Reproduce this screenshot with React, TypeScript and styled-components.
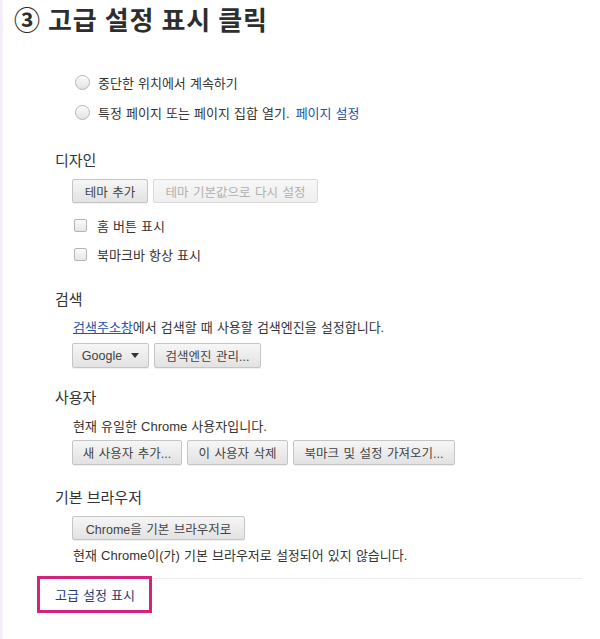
import React from "react";
import styled, { createGlobalStyle } from "styled-components";

const GlobalStyle = createGlobalStyle`
	html, body {
		margin: 0;
		padding: 0;
		background: #ffffff;
	}
	body {
		font-family: "Liberation Sans", "Noto Sans CJK KR", sans-serif;
		color: #333333;
	}
`;

const Page = styled.div`
	width: 600px;
	height: 639px;
	box-sizing: border-box;
	border-left: 3px solid #f3eef8;
	overflow: hidden;
`;

const Title = styled.h1`
	margin: 0;
	padding: 3px 0 0 11px;
	height: 67px;
	box-sizing: border-box;
	font-family: "Noto Sans CJK KR", sans-serif;
	font-size: 26px;
	font-weight: 700;
	line-height: 32px;
	letter-spacing: 1px;
	color: #2e2e2e;
`;

const Settings = styled.div`
	display: flex;
	flex-direction: column;
	padding-left: 52px;
	font-size: 13px;
	word-spacing: 0.5px;
`;

const Body = styled.div`
	display: flex;
	flex-direction: column;
	padding-left: 18px;
`;

const OptionRow = styled.label<{ $h: number }>`
	display: flex;
	align-items: center;
	gap: 8px;
	height: ${(p) => p.$h}px;
	color: #333;
`;

const Radio = styled.span`
	width: 13px;
	height: 13px;
	margin-left: 2px;
	border-radius: 50%;
	border: 1px solid #b4b4b4;
	background: linear-gradient(#fbfbfb, #e3e3e3);
	box-shadow: inset 0 1px 1px #fff;
`;

const Checkbox = styled.span`
	width: 11px;
	height: 11px;
	margin-left: 1px;
	margin-right: 2px;
	border-radius: 2px;
	border: 1px solid #b4b4b4;
	background: linear-gradient(#fafafa, #e6e6e6);
`;

const Heading = styled.h2<{ $top: number }>`
	margin: ${(p) => p.$top}px 0 0;
	height: 24px;
	display: flex;
	align-items: center;
	font-size: 15px;
	font-weight: 400;
	word-spacing: 0;
	color: #333;
`;

const TextLine = styled.div<{ $top: number }>`
	margin-top: ${(p) => p.$top}px;
	height: 20px;
	display: flex;
	align-items: center;
	color: #333;
`;

const Link = styled.a<{ $underline?: boolean }>`
	color: #2452a8;
	text-decoration: ${(p) => (p.$underline ? "underline" : "none")};
	margin-left: ${(p) => (p.$underline ? 0 : 6)}px;
`;

const ButtonRow = styled.div<{ $top: number }>`
	display: flex;
	gap: 5px;
	margin-top: ${(p) => p.$top}px;
	margin-left: -1px;
`;

const Button = styled.button<{ $w: number; $h?: number }>`
	width: ${(p) => p.$w}px;
	height: ${(p) => p.$h ?? 25}px;
	box-sizing: border-box;
	padding: 0;
	display: flex;
	align-items: center;
	justify-content: center;
	gap: 9px;
	font-family: "Liberation Sans", "Noto Sans CJK KR", sans-serif;
	font-size: 12.5px;
	word-spacing: 1px;
	white-space: nowrap;
	color: #444;
	border: 1px solid #c5c5c5;
	border-radius: 2px;
	background: linear-gradient(#f6f6f6, #e2e2e2);
	box-shadow: 0 1px 0 rgba(0, 0, 0, 0.06);

	&:disabled {
		color: #b0b0b0;
		border-color: #dadada;
		background: linear-gradient(#f7f7f7, #efefef);
		box-shadow: none;
	}
`;

const Footer = styled.div`
	margin: 14px 0 0 34px;
	width: 545px;
	border-top: 1px solid #ececec;
`;

const Highlight = styled.div`
	margin-top: -3px;
	width: 115px;
	height: 37px;
	box-sizing: border-box;
	border: 3px solid #d4237c;
	display: flex;
	align-items: center;
	padding-left: 15px;
	font-size: 13px;
	word-spacing: 0.5px;
	color: #243a70;
`;

const Caret = () => (
	<svg width="8" height="5" viewBox="0 0 8 5">
		<path d="M0 0 H8 L4 5 Z" fill="#333" />
	</svg>
);

export default function App() {
	return (
		<Page>
			<GlobalStyle />
			<Title>③ 고급 설정 표시 클릭</Title>
			<Settings>
				<Body>
					<OptionRow $h={30}>
						<Radio />
						중단한 위치에서 계속하기
					</OptionRow>
					<OptionRow $h={30}>
						<Radio />
						<span>
							특정 페이지 또는 페이지 집합 열기.
							<Link href="#">페이지 설정</Link>
						</span>
					</OptionRow>
				</Body>

				<Heading $top={20}>디자인</Heading>
				<Body>
					<ButtonRow $top={8}>
						<Button $w={76} $h={24}>테마 추가</Button>
						<Button $w={165} $h={24} disabled>
							테마 기본값으로 다시 설정
						</Button>
					</ButtonRow>
					<OptionRow $h={29} style={{ marginTop: 8 }}>
						<Checkbox />
						홈 버튼 표시
					</OptionRow>
					<OptionRow $h={29}>
						<Checkbox />
						북마크바 항상 표시
					</OptionRow>
				</Body>

				<Heading $top={17}>검색</Heading>
				<Body>
					<TextLine $top={6}>
						<span>
							<Link href="#" $underline>
								검색주소창
							</Link>
							에서 검색할 때 사용할 검색엔진을 설정합니다.
						</span>
					</TextLine>
					<ButtonRow $top={7}>
						<Button $w={77}>
							Google
							<Caret />
						</Button>
						<Button $w={107}>검색엔진 관리...</Button>
					</ButtonRow>
				</Body>

				<Heading $top={16}>사용자</Heading>
				<Body>
					<TextLine $top={7}>현재 유일한 Chrome 사용자입니다.</TextLine>
					<ButtonRow $top={5}>
						<Button $w={110}>새 사용자 추가...</Button>
						<Button $w={101}>이 사용자 삭제</Button>
						<Button $w={162}>북마크 및 설정 가져오기...</Button>
					</ButtonRow>
				</Body>

				<Heading $top={19}>기본 브라우저</Heading>
				<Body>
					<ButtonRow $top={8}>
						<Button $w={173} $h={24}>
							Chrome을 기본 브라우저로
						</Button>
					</ButtonRow>
					<TextLine $top={4}>
						현재 Chrome이(가) 기본 브라우저로 설정되어 있지 않습니다.
					</TextLine>
				</Body>
			</Settings>
			<Footer>
				<Highlight>고급 설정 표시</Highlight>
			</Footer>
		</Page>
	);
}
